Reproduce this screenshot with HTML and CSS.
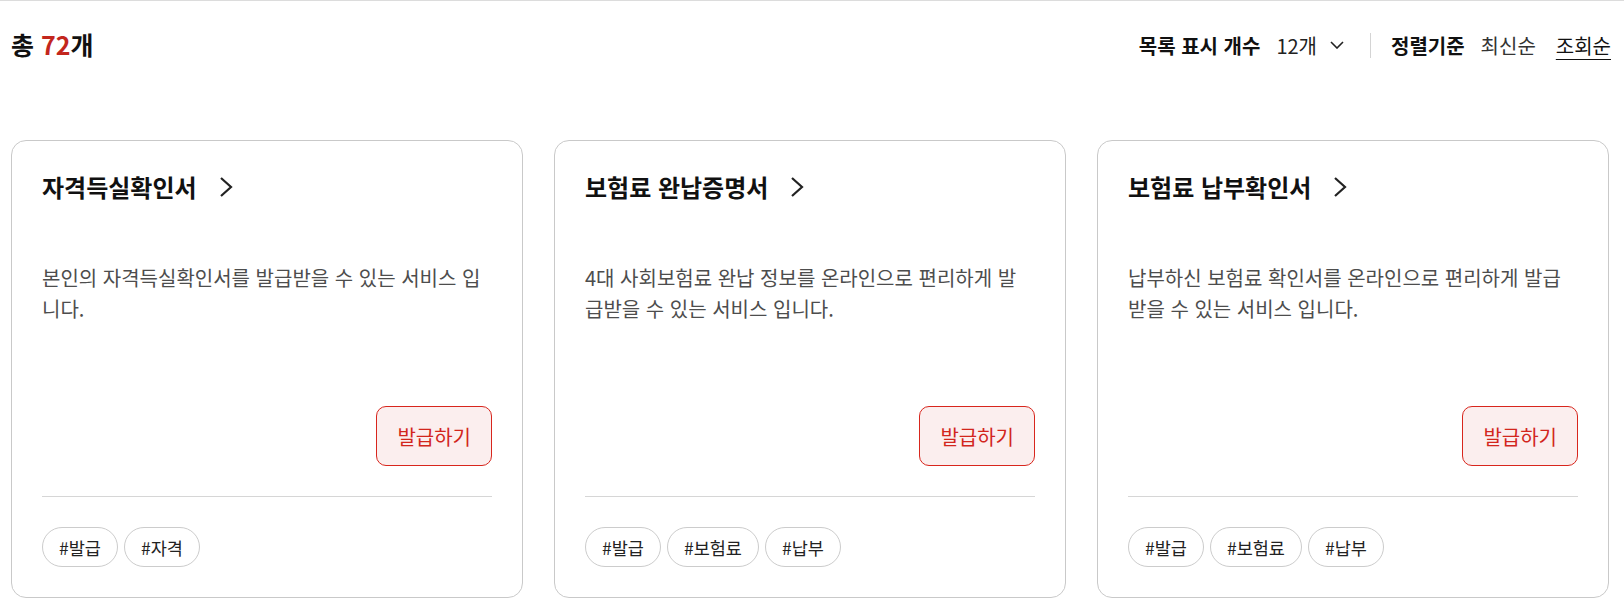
FILE: index.html
```html
<!DOCTYPE html>
<html lang="ko">
<head>
<meta charset="utf-8">
<title>증명서 발급</title>
<link rel="stylesheet" href="styles.css">
</head>
<body>
<div class="page">
  <div class="toolbar">
    <div class="total">총 <em>72</em>개</div>
    <div class="controls">
      <span class="label">목록 표시 개수</span>
      <span class="select">12개
        <svg class="caret" width="14" height="8" viewBox="0 0 14 8"><path d="M1 1l6 6 6-6" fill="none" stroke="#222" stroke-width="1.6"/></svg>
      </span>
      <span class="divider"></span>
      <span class="label">정렬기준</span>
      <span class="sort">최신순</span>
      <span class="sort active">조회순</span>
    </div>
  </div>

  <div class="grid">
    <div class="card">
      <div class="title">자격득실확인서
        <svg class="arrow" width="14" height="20" viewBox="0 0 14 20"><path d="M2 1l10 9-10 9" fill="none" stroke="#222" stroke-width="2.2"/></svg>
      </div>
      <p class="desc">본인의 자격득실확인서를 발급받을 수 있는 서비스 입니다.</p>
      <div class="actions"><button class="issue">발급하기</button></div>
      <div class="tags"><span class="tag">#발급</span><span class="tag">#자격</span></div>
    </div>
    <div class="card">
      <div class="title">보험료 완납증명서
        <svg class="arrow" width="14" height="20" viewBox="0 0 14 20"><path d="M2 1l10 9-10 9" fill="none" stroke="#222" stroke-width="2.2"/></svg>
      </div>
      <p class="desc">4대 사회보험료 완납 정보를 온라인으로 편리하게 발급받을 수 있는 서비스 입니다.</p>
      <div class="actions"><button class="issue">발급하기</button></div>
      <div class="tags"><span class="tag">#발급</span><span class="tag">#보험료</span><span class="tag">#납부</span></div>
    </div>
    <div class="card">
      <div class="title">보험료 납부확인서
        <svg class="arrow" width="14" height="20" viewBox="0 0 14 20"><path d="M2 1l10 9-10 9" fill="none" stroke="#222" stroke-width="2.2"/></svg>
      </div>
      <p class="desc">납부하신 보험료 확인서를 온라인으로 편리하게 발급받을 수 있는 서비스 입니다.</p>
      <div class="actions"><button class="issue">발급하기</button></div>
      <div class="tags"><span class="tag">#발급</span><span class="tag">#보험료</span><span class="tag">#납부</span></div>
    </div>
  </div>
</div>
</body>
</html>
```

FILE: styles.css
```css
* { box-sizing: border-box; }
html, body { margin: 0; background: #fff; }
body {
  font-family: "Noto Sans CJK KR", "Noto Sans", sans-serif;
  color: #222;
}
.page {
  border-top: 1px solid #dcdcdc;
  padding: 0 15px 0 11px;
}
.toolbar {
  height: 86px;
  margin-right: -2px;
  display: flex;
  align-items: center;
  justify-content: space-between;
}
.total {
  font-size: 25px;
  font-weight: 700;
  color: #111;
}
.total em {
  font-style: normal;
  color: #c3261d;
}
.controls {
  display: flex;
  align-items: center;
  font-size: 20px;
  padding-top: 2px;
}
.label {
  font-weight: 700;
  color: #111;
}
.select {
  margin-left: 16px;
  display: flex;
  align-items: center;
  color: #222;
}
.caret { margin-left: 13px; }
.divider {
  width: 1px;
  height: 25px;
  background: #d4d4d4;
  margin: 0 20px 0 26px;
}
.sort {
  margin-left: 16px;
  color: #333;
}
.sort.active {
  margin-left: 20px;
  color: #111;
  text-decoration: underline;
  text-underline-offset: 5px;
  text-decoration-thickness: 1px;
}
.grid {
  margin-top: 53px;
  display: grid;
  grid-template-columns: repeat(3, 1fr);
  column-gap: 31px;
}
.card {
  border: 1px solid #c9c9c9;
  border-radius: 15px;
  padding: 30px;
  display: flex;
  flex-direction: column;
}
.title {
  font-size: 24px;
  font-weight: 700;
  color: #111;
  line-height: 31px;
  display: flex;
  align-items: center;
}
.arrow { margin-left: 22px; }
.desc {
  margin: 60px 0 0;
  padding-right: 2px;
  font-size: 20px;
  line-height: 31px;
  color: #4d4d4d;
  height: 62px;
}
.actions {
  margin-top: 82px;
  display: flex;
  justify-content: flex-end;
  padding-bottom: 30px;
  border-bottom: 1px solid #d6d6d6;
}
.issue {
  font-family: inherit;
  height: 60px;
  padding: 0 20px;
  font-size: 20px;
  color: #d2261d;
  background: #fbeeee;
  border: 1px solid #d8261d;
  border-radius: 10px;
}
.tags {
  margin-top: 30px;
  display: flex;
  gap: 6px;
}
.tag {
  height: 40px;
  padding: 0 16px;
  display: flex;
  align-items: center;
  border: 1px solid #cccccc;
  border-radius: 20px;
  font-size: 17.5px;
  color: #222;
}
```
